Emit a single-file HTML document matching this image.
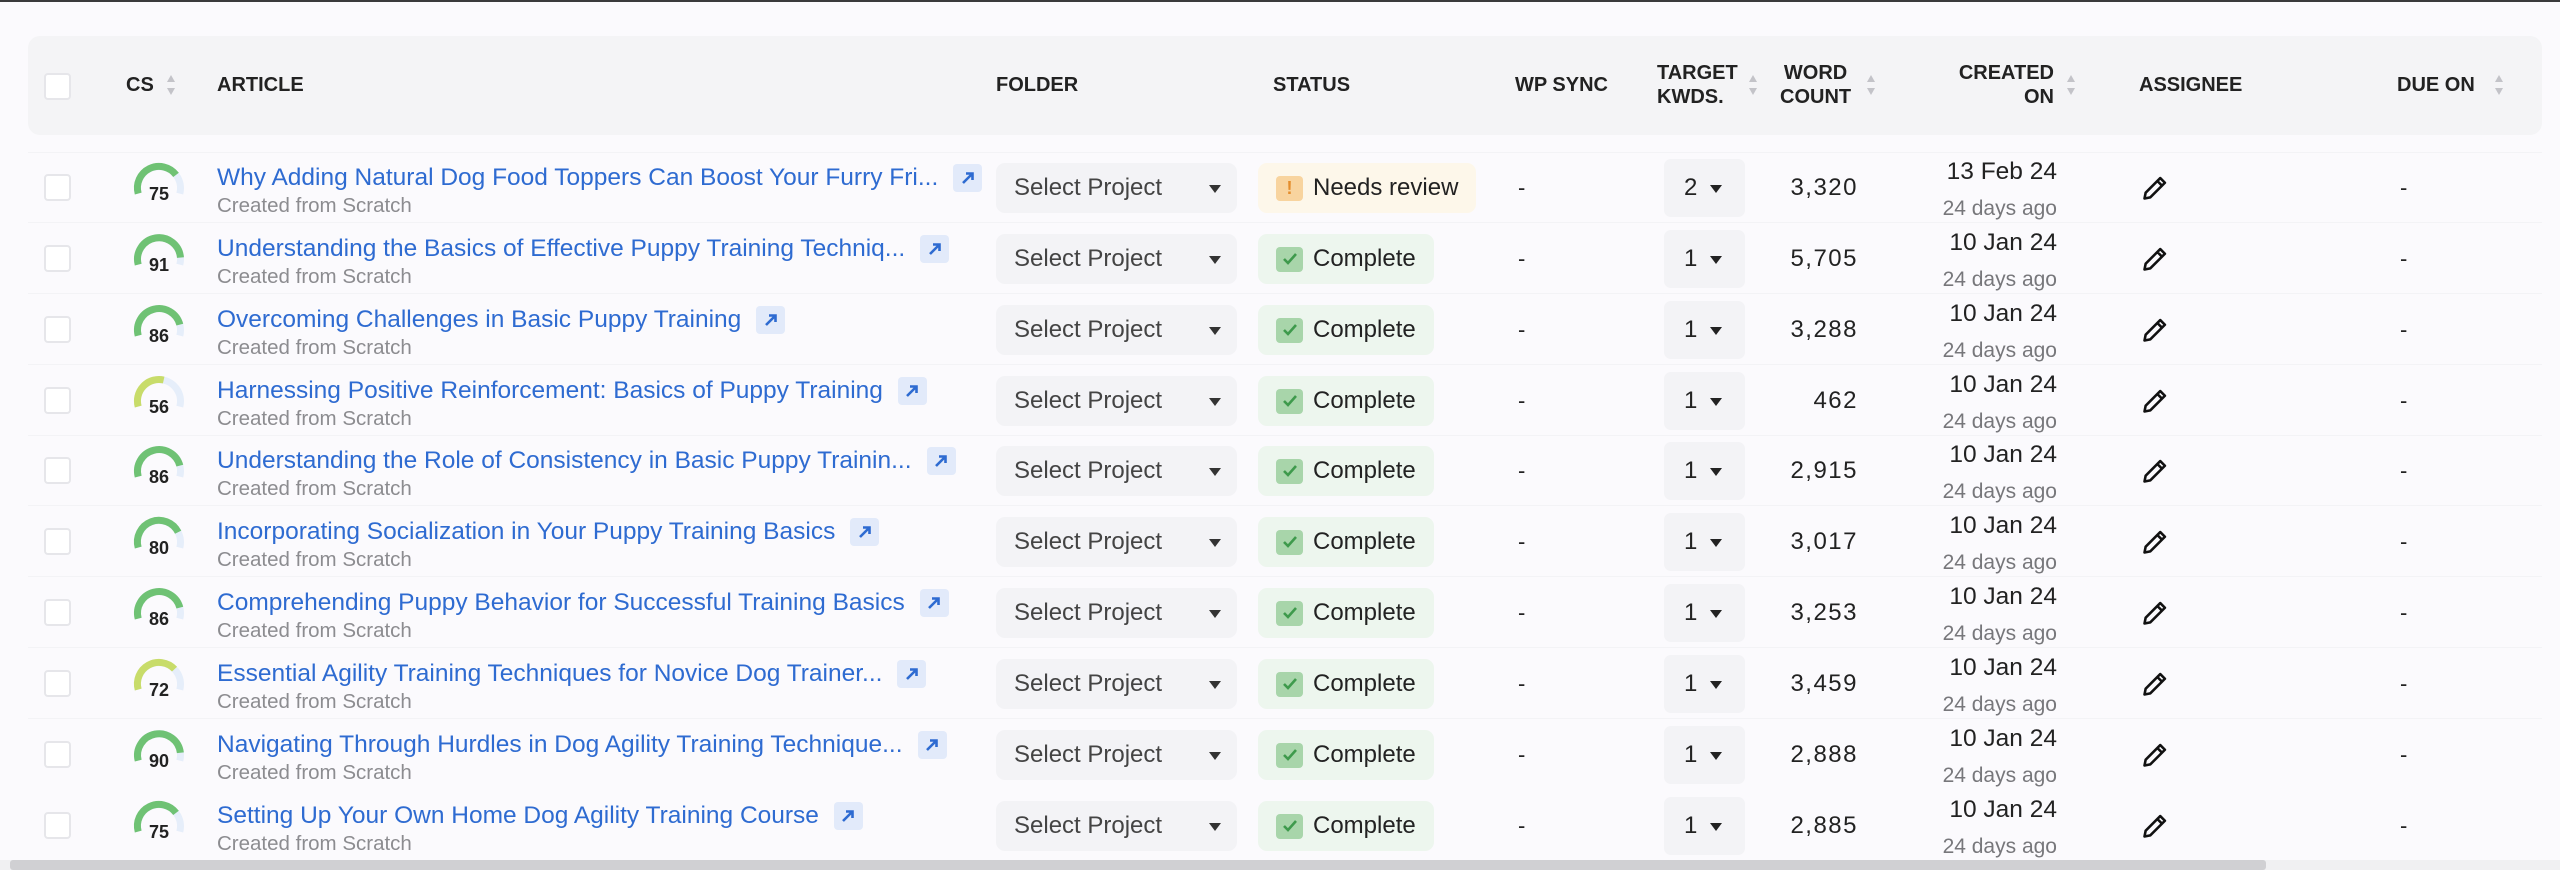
<!DOCTYPE html>
<html><head><meta charset="utf-8"><style>
*{margin:0;padding:0;box-sizing:border-box}
body{width:2560px;height:870px;background:#fbfafd;font-family:"Liberation Sans",sans-serif;position:relative;overflow:hidden;color:#222}
.abs{position:absolute}
.topline{left:0;top:0;width:2560px;height:2px;background:#3a3a3c}
.hdr{left:28px;top:36px;width:2514px;height:99px;background:#f4f4f6;border-radius:12px}
.h{position:absolute;font-weight:bold;font-size:20px;color:#222;line-height:24px;white-space:nowrap}
.sort{position:absolute;width:10px;height:24px}
.cb{position:absolute;width:27px;height:27px;border:2px solid #e6e6ea;border-radius:4px;background:#fff}
.row{position:absolute;left:0;width:2560px;height:70px}
.sep{position:absolute;left:28px;width:2514px;height:1px;background:#f3f3f6}
.g{position:absolute;left:129px;top:7px}
.tt{position:absolute;left:217px;top:11px;display:flex;align-items:center;white-space:nowrap}
.tt span{font-size:24.5px;color:#2e6bd1;line-height:26px}
.lk{width:29px;height:28px;background:#e2eafa;border-radius:4px;margin-left:15px;display:flex;align-items:center;justify-content:center}
.sub{position:absolute;left:217px;top:42px;font-size:20.5px;color:#8c8c90;line-height:21px;white-space:nowrap}
.sel{position:absolute;left:996px;top:10px;width:241px;height:50px;background:#f3f3f6;border-radius:9px;font-size:24px;color:#444;line-height:50px;padding-left:18px}
.sel i{position:absolute;right:16px;top:22px;width:0;height:0;border-left:6px solid transparent;border-right:6px solid transparent;border-top:8px solid #333}
.st{position:absolute;left:1258px;top:10px;height:50px;border-radius:9px;display:flex;align-items:center;padding:0 18px;font-size:24px;color:#222}
.st .ic{width:27px;height:25px;border-radius:4px;margin-right:10px;display:flex;align-items:center;justify-content:center}
.ok{background:#edf6ee}.ok .ic{background:#a8d5aa}
.nr{background:#fdf7ea}.nr .ic{background:#f8d49f;color:#e48d2c;font-size:18px;font-weight:bold}
.dash{position:absolute;font-size:22px;top:23px;line-height:24px}
.kw{position:absolute;left:1664px;top:6px;width:81px;height:58px;background:#f3f3f6;border-radius:7px;font-size:24px;line-height:58px;padding-left:20px}
.kw i{position:absolute;left:46px;top:26px;width:0;height:0;border-left:6px solid transparent;border-right:6px solid transparent;border-top:8px solid #222}
.wc{position:absolute;right:702px;top:22px;font-size:24px;letter-spacing:1.5px;line-height:26px}
.dt{position:absolute;right:503px;top:6px;font-size:24.5px;line-height:26px;text-align:right}
.ago{position:absolute;right:503px;top:45px;font-size:21px;color:#77777b;line-height:22px}
.pen{position:absolute;left:2141px;top:21px}
</style></head><body>
<div class="abs topline"></div>
<div class="abs hdr"></div>
<div class="cb" style="left:44px;top:73px;background:#fff"></div>
<div class="h" style="left:126px;top:73px">CS</div>
<svg class="sort" style="left:166px;top:73px" viewBox="0 0 10 24"><path d="M5 2L9 9H1Z" fill="#c3c3c8"/><path d="M5 22L9 15H1Z" fill="#c3c3c8"/></svg>
<div class="h" style="left:217px;top:73px">ARTICLE</div>
<div class="h" style="left:996px;top:73px">FOLDER</div>
<div class="h" style="left:1273px;top:73px">STATUS</div>
<div class="h" style="left:1515px;top:73px">WP SYNC</div>
<div class="h" style="left:1657px;top:61px">TARGET<br>KWDS.</div>
<svg class="sort" style="left:1748px;top:73px" viewBox="0 0 10 24"><path d="M5 2L9 9H1Z" fill="#c3c3c8"/><path d="M5 22L9 15H1Z" fill="#c3c3c8"/></svg>
<div class="h" style="left:1780px;top:61px;text-align:center">WORD<br>COUNT</div>
<svg class="sort" style="left:1866px;top:73px" viewBox="0 0 10 24"><path d="M5 2L9 9H1Z" fill="#c3c3c8"/><path d="M5 22L9 15H1Z" fill="#c3c3c8"/></svg>
<div class="h" style="right:506px;top:61px;text-align:right">CREATED<br>ON</div>
<svg class="sort" style="left:2066px;top:73px" viewBox="0 0 10 24"><path d="M5 2L9 9H1Z" fill="#c3c3c8"/><path d="M5 22L9 15H1Z" fill="#c3c3c8"/></svg>
<div class="h" style="left:2139px;top:73px">ASSIGNEE</div>
<div class="h" style="left:2397px;top:73px">DUE ON</div>
<svg class="sort" style="left:2494px;top:73px" viewBox="0 0 10 24"><path d="M5 2L9 9H1Z" fill="#c3c3c8"/><path d="M5 22L9 15H1Z" fill="#c3c3c8"/></svg>
<div class="sep" style="top:152px"></div>

<div class="row" style="top:153px">
<div class="cb" style="left:44px;top:21px"></div>
<svg class="g" width="60" height="46"><path d="M9.2 33.6A21.5 21.5 0 1 1 50.8 33.6" fill="none" stroke="#e6eefa" stroke-width="7"/><path d="M9.2 33.6A21.5 21.5 0 0 1 47.05 14.9" fill="none" stroke="#6fc274" stroke-width="7"/><text x="30" y="40" text-anchor="middle" font-family="Liberation Sans" font-weight="bold" font-size="18" fill="#222">75</text></svg>
<div class="tt"><span>Why Adding Natural Dog Food Toppers Can Boost Your Furry Fri...</span><div class="lk"><svg width="16" height="16" viewBox="0 0 16 16"><path d="M3 13L12 4M6 3.5H12.5V10" fill="none" stroke="#2e6bd1" stroke-width="2.6"/></svg></div></div>
<div class="sub">Created from Scratch</div>
<div class="sel">Select Project<i></i></div>
<div class="st nr"><div class="ic">!</div>Needs review</div>
<div class="dash" style="left:1518px">-</div>
<div class="kw">2<i></i></div>
<div class="wc">3,320</div>
<div class="dt">13 Feb 24</div><div class="ago">24 days ago</div>
<svg class="pen" width="28" height="28" viewBox="0 0 24 24"><path d="M16.5 3.5l4 4L8 20l-5 1 1-5z M14 6l4 4" fill="none" stroke="#111" stroke-width="2.2" stroke-linejoin="round"/></svg>
<div class="dash" style="left:2400px">-</div>
<div class="sep" style="top:69px"></div>
</div>

<div class="row" style="top:224px">
<div class="cb" style="left:44px;top:21px"></div>
<svg class="g" width="60" height="46"><path d="M9.2 33.6A21.5 21.5 0 1 1 50.8 33.6" fill="none" stroke="#e6eefa" stroke-width="7"/><path d="M9.2 33.6A21.5 21.5 0 1 1 51.45 26.54" fill="none" stroke="#6fc274" stroke-width="7"/><text x="30" y="40" text-anchor="middle" font-family="Liberation Sans" font-weight="bold" font-size="18" fill="#222">91</text></svg>
<div class="tt"><span>Understanding the Basics of Effective Puppy Training Techniq...</span><div class="lk"><svg width="16" height="16" viewBox="0 0 16 16"><path d="M3 13L12 4M6 3.5H12.5V10" fill="none" stroke="#2e6bd1" stroke-width="2.6"/></svg></div></div>
<div class="sub">Created from Scratch</div>
<div class="sel">Select Project<i></i></div>
<div class="st ok"><div class="ic"><svg width="16" height="14" viewBox="0 0 16 14"><path d="M2 7l4 4 8-9" fill="none" stroke="#3e9a4c" stroke-width="2.6"/></svg></div>Complete</div>
<div class="dash" style="left:1518px">-</div>
<div class="kw">1<i></i></div>
<div class="wc">5,705</div>
<div class="dt">10 Jan 24</div><div class="ago">24 days ago</div>
<svg class="pen" width="28" height="28" viewBox="0 0 24 24"><path d="M16.5 3.5l4 4L8 20l-5 1 1-5z M14 6l4 4" fill="none" stroke="#111" stroke-width="2.2" stroke-linejoin="round"/></svg>
<div class="dash" style="left:2400px">-</div>
<div class="sep" style="top:69px"></div>
</div>

<div class="row" style="top:295px">
<div class="cb" style="left:44px;top:21px"></div>
<svg class="g" width="60" height="46"><path d="M9.2 33.6A21.5 21.5 0 1 1 50.8 33.6" fill="none" stroke="#e6eefa" stroke-width="7"/><path d="M9.2 33.6A21.5 21.5 0 1 1 50.83 22.65" fill="none" stroke="#6fc274" stroke-width="7"/><text x="30" y="40" text-anchor="middle" font-family="Liberation Sans" font-weight="bold" font-size="18" fill="#222">86</text></svg>
<div class="tt"><span>Overcoming Challenges in Basic Puppy Training</span><div class="lk"><svg width="16" height="16" viewBox="0 0 16 16"><path d="M3 13L12 4M6 3.5H12.5V10" fill="none" stroke="#2e6bd1" stroke-width="2.6"/></svg></div></div>
<div class="sub">Created from Scratch</div>
<div class="sel">Select Project<i></i></div>
<div class="st ok"><div class="ic"><svg width="16" height="14" viewBox="0 0 16 14"><path d="M2 7l4 4 8-9" fill="none" stroke="#3e9a4c" stroke-width="2.6"/></svg></div>Complete</div>
<div class="dash" style="left:1518px">-</div>
<div class="kw">1<i></i></div>
<div class="wc">3,288</div>
<div class="dt">10 Jan 24</div><div class="ago">24 days ago</div>
<svg class="pen" width="28" height="28" viewBox="0 0 24 24"><path d="M16.5 3.5l4 4L8 20l-5 1 1-5z M14 6l4 4" fill="none" stroke="#111" stroke-width="2.2" stroke-linejoin="round"/></svg>
<div class="dash" style="left:2400px">-</div>
<div class="sep" style="top:69px"></div>
</div>

<div class="row" style="top:366px">
<div class="cb" style="left:44px;top:21px"></div>
<svg class="g" width="60" height="46"><path d="M9.2 33.6A21.5 21.5 0 1 1 50.8 33.6" fill="none" stroke="#e6eefa" stroke-width="7"/><path d="M9.2 33.6A21.5 21.5 0 0 1 34.69 7.02" fill="none" stroke="#c8dc6a" stroke-width="7"/><text x="30" y="40" text-anchor="middle" font-family="Liberation Sans" font-weight="bold" font-size="18" fill="#222">56</text></svg>
<div class="tt"><span>Harnessing Positive Reinforcement: Basics of Puppy Training</span><div class="lk"><svg width="16" height="16" viewBox="0 0 16 16"><path d="M3 13L12 4M6 3.5H12.5V10" fill="none" stroke="#2e6bd1" stroke-width="2.6"/></svg></div></div>
<div class="sub">Created from Scratch</div>
<div class="sel">Select Project<i></i></div>
<div class="st ok"><div class="ic"><svg width="16" height="14" viewBox="0 0 16 14"><path d="M2 7l4 4 8-9" fill="none" stroke="#3e9a4c" stroke-width="2.6"/></svg></div>Complete</div>
<div class="dash" style="left:1518px">-</div>
<div class="kw">1<i></i></div>
<div class="wc">462</div>
<div class="dt">10 Jan 24</div><div class="ago">24 days ago</div>
<svg class="pen" width="28" height="28" viewBox="0 0 24 24"><path d="M16.5 3.5l4 4L8 20l-5 1 1-5z M14 6l4 4" fill="none" stroke="#111" stroke-width="2.2" stroke-linejoin="round"/></svg>
<div class="dash" style="left:2400px">-</div>
<div class="sep" style="top:69px"></div>
</div>

<div class="row" style="top:436px">
<div class="cb" style="left:44px;top:21px"></div>
<svg class="g" width="60" height="46"><path d="M9.2 33.6A21.5 21.5 0 1 1 50.8 33.6" fill="none" stroke="#e6eefa" stroke-width="7"/><path d="M9.2 33.6A21.5 21.5 0 1 1 50.83 22.65" fill="none" stroke="#6fc274" stroke-width="7"/><text x="30" y="40" text-anchor="middle" font-family="Liberation Sans" font-weight="bold" font-size="18" fill="#222">86</text></svg>
<div class="tt"><span>Understanding the Role of Consistency in Basic Puppy Trainin...</span><div class="lk"><svg width="16" height="16" viewBox="0 0 16 16"><path d="M3 13L12 4M6 3.5H12.5V10" fill="none" stroke="#2e6bd1" stroke-width="2.6"/></svg></div></div>
<div class="sub">Created from Scratch</div>
<div class="sel">Select Project<i></i></div>
<div class="st ok"><div class="ic"><svg width="16" height="14" viewBox="0 0 16 14"><path d="M2 7l4 4 8-9" fill="none" stroke="#3e9a4c" stroke-width="2.6"/></svg></div>Complete</div>
<div class="dash" style="left:1518px">-</div>
<div class="kw">1<i></i></div>
<div class="wc">2,915</div>
<div class="dt">10 Jan 24</div><div class="ago">24 days ago</div>
<svg class="pen" width="28" height="28" viewBox="0 0 24 24"><path d="M16.5 3.5l4 4L8 20l-5 1 1-5z M14 6l4 4" fill="none" stroke="#111" stroke-width="2.2" stroke-linejoin="round"/></svg>
<div class="dash" style="left:2400px">-</div>
<div class="sep" style="top:69px"></div>
</div>

<div class="row" style="top:507px">
<div class="cb" style="left:44px;top:21px"></div>
<svg class="g" width="60" height="46"><path d="M9.2 33.6A21.5 21.5 0 1 1 50.8 33.6" fill="none" stroke="#e6eefa" stroke-width="7"/><path d="M9.2 33.6A21.5 21.5 0 0 1 49.16 18.24" fill="none" stroke="#6fc274" stroke-width="7"/><text x="30" y="40" text-anchor="middle" font-family="Liberation Sans" font-weight="bold" font-size="18" fill="#222">80</text></svg>
<div class="tt"><span>Incorporating Socialization in Your Puppy Training Basics</span><div class="lk"><svg width="16" height="16" viewBox="0 0 16 16"><path d="M3 13L12 4M6 3.5H12.5V10" fill="none" stroke="#2e6bd1" stroke-width="2.6"/></svg></div></div>
<div class="sub">Created from Scratch</div>
<div class="sel">Select Project<i></i></div>
<div class="st ok"><div class="ic"><svg width="16" height="14" viewBox="0 0 16 14"><path d="M2 7l4 4 8-9" fill="none" stroke="#3e9a4c" stroke-width="2.6"/></svg></div>Complete</div>
<div class="dash" style="left:1518px">-</div>
<div class="kw">1<i></i></div>
<div class="wc">3,017</div>
<div class="dt">10 Jan 24</div><div class="ago">24 days ago</div>
<svg class="pen" width="28" height="28" viewBox="0 0 24 24"><path d="M16.5 3.5l4 4L8 20l-5 1 1-5z M14 6l4 4" fill="none" stroke="#111" stroke-width="2.2" stroke-linejoin="round"/></svg>
<div class="dash" style="left:2400px">-</div>
<div class="sep" style="top:69px"></div>
</div>

<div class="row" style="top:578px">
<div class="cb" style="left:44px;top:21px"></div>
<svg class="g" width="60" height="46"><path d="M9.2 33.6A21.5 21.5 0 1 1 50.8 33.6" fill="none" stroke="#e6eefa" stroke-width="7"/><path d="M9.2 33.6A21.5 21.5 0 1 1 50.83 22.65" fill="none" stroke="#6fc274" stroke-width="7"/><text x="30" y="40" text-anchor="middle" font-family="Liberation Sans" font-weight="bold" font-size="18" fill="#222">86</text></svg>
<div class="tt"><span>Comprehending Puppy Behavior for Successful Training Basics</span><div class="lk"><svg width="16" height="16" viewBox="0 0 16 16"><path d="M3 13L12 4M6 3.5H12.5V10" fill="none" stroke="#2e6bd1" stroke-width="2.6"/></svg></div></div>
<div class="sub">Created from Scratch</div>
<div class="sel">Select Project<i></i></div>
<div class="st ok"><div class="ic"><svg width="16" height="14" viewBox="0 0 16 14"><path d="M2 7l4 4 8-9" fill="none" stroke="#3e9a4c" stroke-width="2.6"/></svg></div>Complete</div>
<div class="dash" style="left:1518px">-</div>
<div class="kw">1<i></i></div>
<div class="wc">3,253</div>
<div class="dt">10 Jan 24</div><div class="ago">24 days ago</div>
<svg class="pen" width="28" height="28" viewBox="0 0 24 24"><path d="M16.5 3.5l4 4L8 20l-5 1 1-5z M14 6l4 4" fill="none" stroke="#111" stroke-width="2.2" stroke-linejoin="round"/></svg>
<div class="dash" style="left:2400px">-</div>
<div class="sep" style="top:69px"></div>
</div>

<div class="row" style="top:649px">
<div class="cb" style="left:44px;top:21px"></div>
<svg class="g" width="60" height="46"><path d="M9.2 33.6A21.5 21.5 0 1 1 50.8 33.6" fill="none" stroke="#e6eefa" stroke-width="7"/><path d="M9.2 33.6A21.5 21.5 0 0 1 45.53 13.12" fill="none" stroke="#c8dc6a" stroke-width="7"/><text x="30" y="40" text-anchor="middle" font-family="Liberation Sans" font-weight="bold" font-size="18" fill="#222">72</text></svg>
<div class="tt"><span>Essential Agility Training Techniques for Novice Dog Trainer...</span><div class="lk"><svg width="16" height="16" viewBox="0 0 16 16"><path d="M3 13L12 4M6 3.5H12.5V10" fill="none" stroke="#2e6bd1" stroke-width="2.6"/></svg></div></div>
<div class="sub">Created from Scratch</div>
<div class="sel">Select Project<i></i></div>
<div class="st ok"><div class="ic"><svg width="16" height="14" viewBox="0 0 16 14"><path d="M2 7l4 4 8-9" fill="none" stroke="#3e9a4c" stroke-width="2.6"/></svg></div>Complete</div>
<div class="dash" style="left:1518px">-</div>
<div class="kw">1<i></i></div>
<div class="wc">3,459</div>
<div class="dt">10 Jan 24</div><div class="ago">24 days ago</div>
<svg class="pen" width="28" height="28" viewBox="0 0 24 24"><path d="M16.5 3.5l4 4L8 20l-5 1 1-5z M14 6l4 4" fill="none" stroke="#111" stroke-width="2.2" stroke-linejoin="round"/></svg>
<div class="dash" style="left:2400px">-</div>
<div class="sep" style="top:69px"></div>
</div>

<div class="row" style="top:720px">
<div class="cb" style="left:44px;top:21px"></div>
<svg class="g" width="60" height="46"><path d="M9.2 33.6A21.5 21.5 0 1 1 50.8 33.6" fill="none" stroke="#e6eefa" stroke-width="7"/><path d="M9.2 33.6A21.5 21.5 0 1 1 51.38 25.75" fill="none" stroke="#6fc274" stroke-width="7"/><text x="30" y="40" text-anchor="middle" font-family="Liberation Sans" font-weight="bold" font-size="18" fill="#222">90</text></svg>
<div class="tt"><span>Navigating Through Hurdles in Dog Agility Training Technique...</span><div class="lk"><svg width="16" height="16" viewBox="0 0 16 16"><path d="M3 13L12 4M6 3.5H12.5V10" fill="none" stroke="#2e6bd1" stroke-width="2.6"/></svg></div></div>
<div class="sub">Created from Scratch</div>
<div class="sel">Select Project<i></i></div>
<div class="st ok"><div class="ic"><svg width="16" height="14" viewBox="0 0 16 14"><path d="M2 7l4 4 8-9" fill="none" stroke="#3e9a4c" stroke-width="2.6"/></svg></div>Complete</div>
<div class="dash" style="left:1518px">-</div>
<div class="kw">1<i></i></div>
<div class="wc">2,888</div>
<div class="dt">10 Jan 24</div><div class="ago">24 days ago</div>
<svg class="pen" width="28" height="28" viewBox="0 0 24 24"><path d="M16.5 3.5l4 4L8 20l-5 1 1-5z M14 6l4 4" fill="none" stroke="#111" stroke-width="2.2" stroke-linejoin="round"/></svg>
<div class="dash" style="left:2400px">-</div>
</div>

<div class="row" style="top:791px">
<div class="cb" style="left:44px;top:21px"></div>
<svg class="g" width="60" height="46"><path d="M9.2 33.6A21.5 21.5 0 1 1 50.8 33.6" fill="none" stroke="#e6eefa" stroke-width="7"/><path d="M9.2 33.6A21.5 21.5 0 0 1 47.05 14.9" fill="none" stroke="#6fc274" stroke-width="7"/><text x="30" y="40" text-anchor="middle" font-family="Liberation Sans" font-weight="bold" font-size="18" fill="#222">75</text></svg>
<div class="tt"><span>Setting Up Your Own Home Dog Agility Training Course</span><div class="lk"><svg width="16" height="16" viewBox="0 0 16 16"><path d="M3 13L12 4M6 3.5H12.5V10" fill="none" stroke="#2e6bd1" stroke-width="2.6"/></svg></div></div>
<div class="sub">Created from Scratch</div>
<div class="sel">Select Project<i></i></div>
<div class="st ok"><div class="ic"><svg width="16" height="14" viewBox="0 0 16 14"><path d="M2 7l4 4 8-9" fill="none" stroke="#3e9a4c" stroke-width="2.6"/></svg></div>Complete</div>
<div class="dash" style="left:1518px">-</div>
<div class="kw">1<i></i></div>
<div class="wc">2,885</div>
<div class="dt">10 Jan 24</div><div class="ago">24 days ago</div>
<svg class="pen" width="28" height="28" viewBox="0 0 24 24"><path d="M16.5 3.5l4 4L8 20l-5 1 1-5z M14 6l4 4" fill="none" stroke="#111" stroke-width="2.2" stroke-linejoin="round"/></svg>
<div class="dash" style="left:2400px">-</div>
</div>

<div class="abs" style="left:0;top:860px;width:2560px;height:10px;background:#f0f0f2"></div>
<div class="abs" style="left:10px;top:860px;width:2256px;height:10px;background:#d0d0d3;border-radius:3px"></div>
</body></html>
